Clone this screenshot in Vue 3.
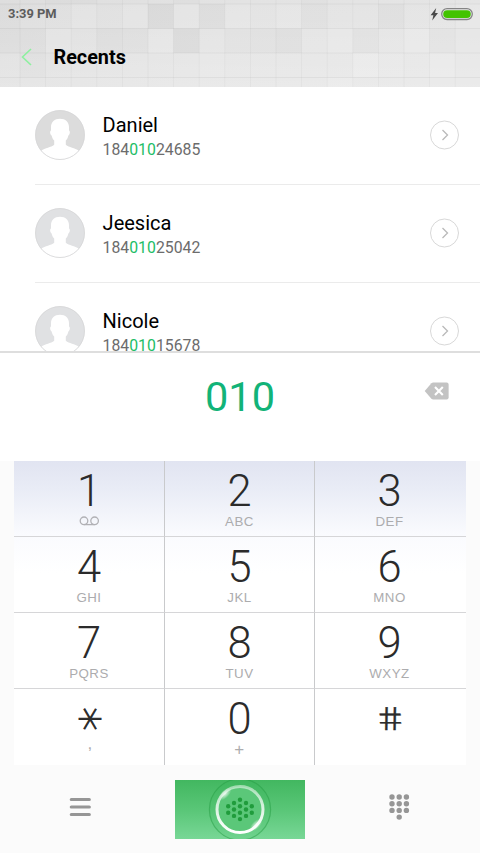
<script setup>
const contacts = [
  { name: 'Daniel', pre: '184', hit: '010', post: '24685', shade: '#dcdcdc' },
  { name: 'Jeesica', pre: '184', hit: '010', post: '25042', shade: '#e0e1e3' },
  { name: 'Nicole', pre: '184', hit: '010', post: '15678', shade: '#e0e1e3' },
]

const keys = [
  { d: '1', sub: '', voicemail: true },
  { d: '2', sub: 'ABC' },
  { d: '3', sub: 'DEF' },
  { d: '4', sub: 'GHI' },
  { d: '5', sub: 'JKL' },
  { d: '6', sub: 'MNO' },
  { d: '7', sub: 'PQRS' },
  { d: '8', sub: 'TUV' },
  { d: '9', sub: 'WXYZ' },
  { d: '*', sub: ',', kind: 'star' },
  { d: '0', sub: '+', kind: 'zero' },
  { d: '#', sub: '', kind: 'hash' },
]

// [column, row, shade] of the paper tiles behind the header
const tiles = [
  [6, 1, 0.03], [8, 1, 0.025], [7, 2, 0.04], [4, 2, 0.02], [5, 2, 0.015],
  [0, 1, 0.01], [1, 2, 0.015], [0, 2, 0.015], [9, 2, 0.01], [1, 3, 0.01],
  [10, 2, 0.015], [11, 2, 0.025], [12, 1, 0.015], [15, 1, 0.02], [14, 2, 0.015],
  [17, 2, 0.01], [2, 0, 0.01], [3, 0, 0.01], [7, 0, 0.01], [12, 0, 0.01],
]
const lightTiles = [
  [3, 1, 0.1], [5, 1, 0.1], [7, 1, 0.1], [6, 2, 0.1], [2, 2, 0.1], [9, 1, 0.08],
  [13, 2, 0.1], [16, 2, 0.12], [14, 3, 0.15], [17, 3, 0.12], [8, 3, 0.08], [13, 4, 0.12],
  [11, 1, 0.1], [18, 1, 0.08], [15, 3, 0.08],
]
const cols = Array.from({ length: 19 }, (_, i) => 20 + i * 25.6)
const rows = [4, 28.5, 53, 77.5]

const buttonDots = [
  [0, -9.6], [-6, -6.3], [6, -6.3], [-11.8, -3], [0, -3], [11.8, -3],
  [-6, 0.2], [6, 0.2], [-11.8, 3.4], [0, 3.4], [11.8, 3.4],
  [-6, 6.6], [6, 6.6], [0, 9.8],
]
const padDots = [
  [3, 3], [10.2, 3], [17.4, 3], [3, 9.7], [10.2, 9.7], [17.4, 9.7],
  [3, 16.4], [10.2, 16.4], [17.4, 16.4], [10.2, 23.1],
]
</script>

<template>
  <div class="phone">
    <header class="top">
      <svg class="paper" width="480" height="87" viewBox="0 0 480 87">
        <defs>
          <linearGradient id="paperFill" x1="0" y1="0" x2="1" y2="0.15">
            <stop offset="0" stop-color="#dedede" />
            <stop offset="0.5" stop-color="#e3e3e3" />
            <stop offset="1" stop-color="#e5e5e5" />
          </linearGradient>
          <linearGradient id="paperShade" x1="0" y1="0" x2="0" y2="1">
            <stop offset="0" stop-color="#fff" stop-opacity="0" />
            <stop offset="1" stop-color="#fff" stop-opacity="0.22" />
          </linearGradient>
        </defs>
        <rect width="480" height="87" fill="url(#paperFill)" />
        <rect width="480" height="87" fill="url(#paperShade)" />
        <rect v-for="(t, i) in tiles" :key="'d' + i" :x="t[0] * 25.6 - 5.6" :y="t[1] * 24.5 - 20.5" width="25.6" height="24.5" fill="#000" :fill-opacity="t[2]" />
        <rect v-for="(t, i) in lightTiles" :key="'l' + i" :x="t[0] * 25.6 - 5.6" :y="t[1] * 24.5 - 20.5" width="25.6" height="24.5" fill="#fff" :fill-opacity="t[2]" />
        <path v-for="x in cols" :key="'c' + x" :d="`M${x} 0V87`" stroke="#000" stroke-opacity="0.03" />
        <path v-for="y in rows" :key="'r' + y" :d="`M0 ${y}H480`" stroke="#000" stroke-opacity="0.045" />
      </svg>
      <div class="status">
        <span class="clock">3:39 PM</span>
        <svg width="46" height="14" viewBox="0 0 46 14">
          <path d="M6.2 1 0.6 8.2H3.4L2.2 13.4 8 6H5.1Z" fill="#4a4a4a" />
          <rect x="11.7" y="1.7" width="30.6" height="10.8" rx="5.4" fill="#e9e9e9" stroke="#858585" stroke-width="1.3" />
          <rect x="13.2" y="3.2" width="27.6" height="7.8" rx="3.9" fill="#43c300" />
        </svg>
      </div>
      <div class="title-bar">
        <svg width="12" height="18" viewBox="0 0 12 18">
          <path d="M10 1 1.5 9 10 17" fill="none" stroke="#8df09f" stroke-width="1.6" />
        </svg>
        <h1>Recents</h1>
      </div>
    </header>

    <main class="list">
      <div v-for="c in contacts" :key="c.name" class="row">
        <svg class="avatar" width="50" height="50" viewBox="0 0 50 50">
          <defs>
            <clipPath :id="'clip' + c.name"><circle cx="25" cy="25" r="24.6" /></clipPath>
          </defs>
          <circle cx="25" cy="25" r="24.7" :fill="c.shade" />
          <path :clip-path="`url(#clip${c.name})`" fill="#fff" d="M25 8.7C30.5 8.7 34 12 34 17V20.5C35.2 20.6 35.2 24.6 33.4 25.4C32.8 28 31.8 29.6 30.8 30.6V34.8C34 37.5 40 38.1 43.8 40.6L40 50H10L6.2 40.6C10 38.1 16 37.5 19.2 34.8V30.6C18.2 29.6 17.2 28 16.6 25.4C14.8 24.6 14.8 20.6 16 20.5V17C16 12 19.5 8.7 25 8.7Z" />
          <circle cx="25" cy="25" r="24.5" fill="none" stroke="#d5d6d7" stroke-width="0.8" />
        </svg>
        <div class="who">
          <div class="name">{{ c.name }}</div>
          <div class="number">{{ c.pre }}<span class="hit">{{ c.hit }}</span>{{ c.post }}</div>
        </div>
        <svg width="30" height="30" viewBox="0 0 30 30">
          <circle cx="14.5" cy="15" r="14" fill="none" stroke="#d8d8d8" />
          <path d="M12.5 10 17.5 15 12.5 20" fill="none" stroke="#b9b9b9" stroke-width="1.3" />
        </svg>
      </div>
    </main>

    <section class="display">
      <div class="typed">010</div>
      <svg class="erase" width="26" height="18" viewBox="0 0 26 18">
        <path d="M0.7 9 7.4 1.2Q8.2 0.4 9.3 0.4H22.6Q24.6 0.4 24.6 2.4V15.6Q24.6 17.6 22.6 17.6H9.3Q8.2 17.6 7.4 16.8Z" fill="#c3c3c3" />
        <path d="M11 5.1 18.8 12.9M18.8 5.1 11 12.9" stroke="#fff" stroke-width="2.1" />
      </svg>
    </section>

    <section class="pad">
      <div v-for="k in keys" :key="k.d" class="key" :class="k.kind">
        <span class="digit">{{ k.d }}</span>
        <svg v-if="k.voicemail" class="vm" width="22" height="10" viewBox="0 0 22 10">
          <g fill="none" stroke="#b1b1b5" stroke-width="1.3">
            <circle cx="6" cy="4.8" r="3.8" />
            <circle cx="16.6" cy="4.8" r="3.8" />
            <path d="M6 8.6H16.6" />
          </g>
        </svg>
        <span v-else-if="k.sub" class="sub">{{ k.sub }}</span>
      </div>
    </section>

    <footer class="bar">
      <svg width="22" height="20" viewBox="0 0 22 20">
        <path d="M2.3 2.5H20.3M2.3 10H20.3M2.3 17.5H20.3" stroke="#969696" stroke-width="3.2" stroke-linecap="round" />
      </svg>
      <svg class="call" width="130" height="59" viewBox="0 0 130 59">
        <defs>
          <linearGradient id="callFill" x1="0" y1="0" x2="0" y2="1">
            <stop offset="0" stop-color="#42b760" />
            <stop offset="0.5" stop-color="#59c677" />
            <stop offset="1" stop-color="#78d796" />
          </linearGradient>
          <linearGradient id="ringFill" x1="0" y1="0" x2="0" y2="1">
            <stop offset="0" stop-color="#fff" stop-opacity="0.5" />
            <stop offset="0.5" stop-color="#fff" stop-opacity="0.8" />
            <stop offset="1" stop-color="#fff" />
          </linearGradient>
          <radialGradient id="glint">
            <stop offset="0" stop-color="#fff" stop-opacity="0.8" />
            <stop offset="1" stop-color="#fff" stop-opacity="0" />
          </radialGradient>
        </defs>
        <rect width="130" height="59" fill="url(#callFill)" />
        <circle cx="65" cy="29.5" r="30.6" fill="#2bad4d" fill-opacity="0.1" stroke="#259d43" stroke-opacity="0.5" stroke-width="1.2" />
        <circle cx="65" cy="29.5" r="23" fill="#5bc779" stroke="url(#ringFill)" stroke-width="3" />
        <ellipse cx="50" cy="14" rx="8" ry="4" transform="rotate(-45 50 14)" fill="url(#glint)" />
        <ellipse cx="81" cy="45" rx="8" ry="4" transform="rotate(-45 81 45)" fill="url(#glint)" />
        <circle v-for="(p, i) in buttonDots" :key="i" :cx="65 + p[0]" :cy="29.3 + p[1]" r="2.2" fill="#209c3c" />
      </svg>
      <svg class="dots" width="21" height="27" viewBox="0 0 21 27">
        <circle v-for="(p, i) in padDots" :key="i" :cx="p[0]" :cy="p[1]" r="2.7" fill="#969696" />
      </svg>
    </footer>
  </div>
</template>

<style>
body {
  margin: 0;
  background: #fafafa;
}
</style>

<style scoped>
.phone {
  width: 480px;
  height: 853px;
  display: flex;
  flex-direction: column;
  overflow: hidden;
  background: #fbfbfb;
  font-family: Roboto, "Noto Sans", sans-serif;
}
.top {
  position: relative;
  height: 87px;
  flex: none;
}
.paper {
  position: absolute;
  inset: 0;
}
.status {
  position: relative;
  height: 27px;
  padding: 0 4px 0 8px;
  display: flex;
  align-items: center;
  justify-content: space-between;
}
.clock {
  font-size: 12.9px;
  font-weight: 700;
  color: #5c5c5c;
}
.title-bar {
  position: relative;
  height: 60px;
  padding-left: 21px;
  display: flex;
  align-items: center;
  gap: 20.5px;
}
.title-bar h1 {
  margin: 2px 0 0;
  font-size: 19.8px;
  line-height: 24px;
  font-weight: 700;
  color: #000;
}
.list {
  height: 264px;
  flex: none;
  overflow: hidden;
  background: #fff;
}
.row {
  height: 97.8px;
  box-sizing: border-box;
  margin-left: 35px;
  padding-right: 20px;
  display: flex;
  align-items: center;
  border-bottom: 1px solid #ebebeb;
}
.who {
  flex: 1;
  padding: 2.6px 0 0 17.6px;
}
.name {
  font-size: 20px;
  line-height: 24px;
  color: #000;
}
.number {
  margin-top: 3px;
  font-size: 15.8px;
  line-height: 20px;
  color: #6c6c6c;
}
.hit {
  color: #22bd66;
}
.display {
  position: relative;
  height: 110px;
  box-sizing: border-box;
  flex: none;
  display: flex;
  justify-content: center;
  padding-top: 19px;
  border-top: 2px solid #dedede;
  background: #fff;
}
.typed {
  font-size: 41.5px;
  line-height: 49px;
  color: #12b378;
}
.erase {
  position: absolute;
  left: 423.5px;
  top: 28.5px;
}
.pad {
  width: 452px;
  height: 304px;
  flex: none;
  margin: 0 14px;
  display: grid;
  grid-template-columns: 151px 150px 151px;
  grid-template-rows: repeat(4, 76px);
  background: linear-gradient(#e1e4f1 0, #e9ecf6 28px, #fafbfe 74px, #fff 112px);
}
.key {
  box-sizing: border-box;
  display: flex;
  flex-direction: column;
  align-items: center;
  padding-top: 9px;
  border-right: 1px solid #c9cacc;
  border-bottom: 1px solid #d6d6d8;
}
.key:nth-child(3n) {
  border-right: 0;
  padding-right: 2px;
}
.key:nth-child(n + 10) {
  border-bottom: 0;
}
.digit {
  font-size: 43.5px;
  line-height: 44px;
  font-weight: 300;
  color: #2b2b2b;
}
.sub {
  font-family: "Liberation Sans", sans-serif;
  font-size: 13.3px;
  line-height: 16px;
  letter-spacing: 0.5px;
  color: #acacae;
}
.vm {
  margin-top: 2px;
}
.star .digit {
  font-family: "DejaVu Sans Light", "DejaVu Sans", sans-serif;
  font-weight: 200;
  font-size: 42px;
  transform: translate(-9px, -1px) rotate(90deg) scale(1.14);
  -webkit-text-stroke: 0.8px #2b2b2b;
}
.star .sub {
  margin-top: -6px;
  padding-left: 2px;
  font-size: 17px;
}
.zero .sub {
  font-size: 17px;
}
.hash .digit {
  font-size: 32px;
  transform: translateY(-1px) scaleX(1.28) skewX(10deg);
  -webkit-text-stroke: 0.3px #2b2b2b;
}
.bar {
  flex: 1;
  padding: 0 70px 4px 69px;
  display: flex;
  align-items: center;
  justify-content: space-between;
}
.call {
  margin-top: 5px;
}
</style>
